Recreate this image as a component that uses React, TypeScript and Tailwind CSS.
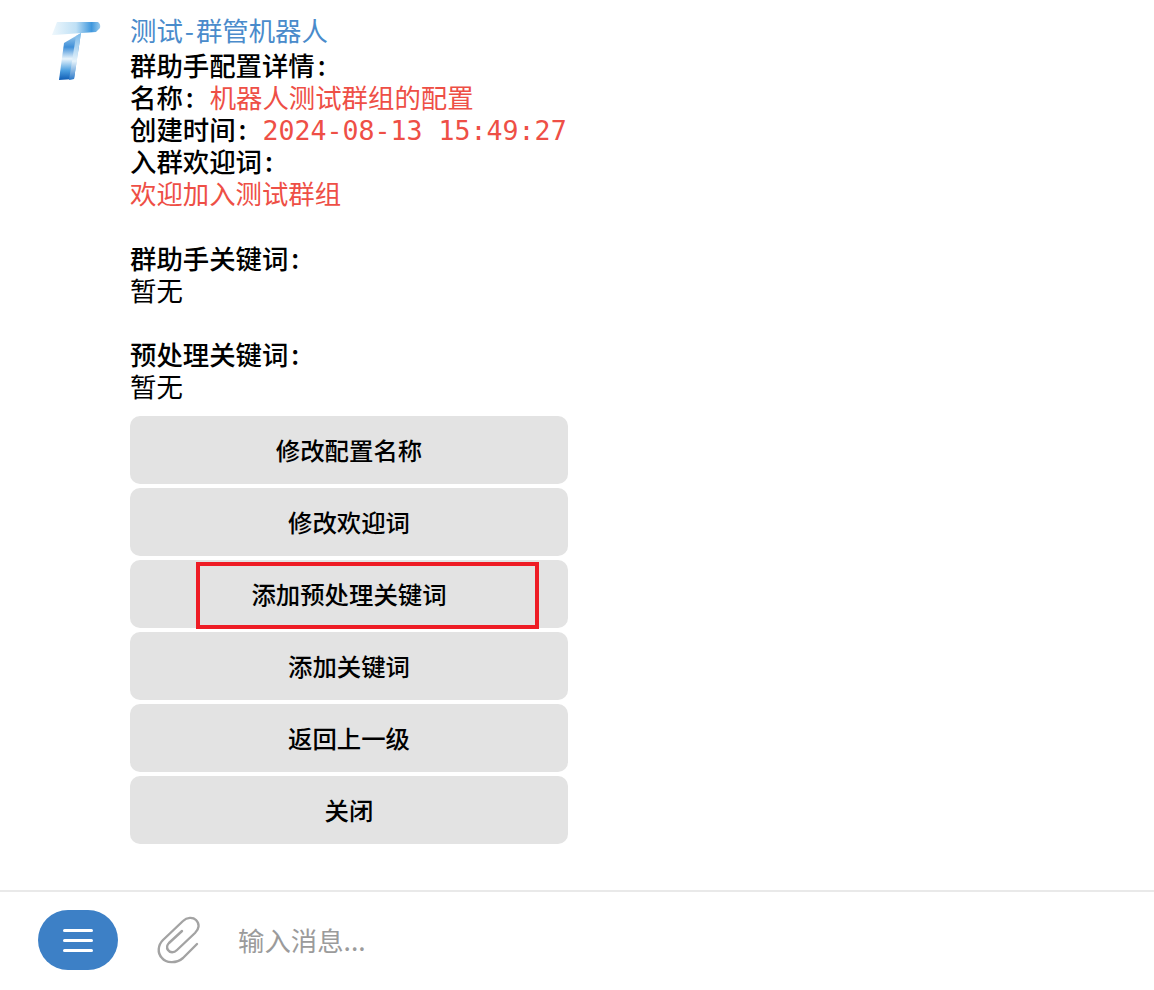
const buttons = ["修改配置名称", "修改欢迎词", "添加预处理关键词", "添加关键词", "返回上一级", "关闭"];

const Colon = () => <span className="ml-[3px]">:</span>;

const Logo = () => (
  <svg width="50" height="60" viewBox="0 0 50 60" className="mt-[8px]">
    <defs>
      <linearGradient id="bar" x1="0" y1="0" x2="1" y2="0">
        <stop offset="0" stopColor="#eef7fc" />
        <stop offset="0.5" stopColor="#bfe0f5" />
        <stop offset="0.82" stopColor="#3f97dd" />
        <stop offset="1" stopColor="#9acbec" />
      </linearGradient>
      <linearGradient id="stem" x1="0" y1="0" x2="0" y2="1">
        <stop offset="0" stopColor="#a8d2ee" />
        <stop offset="0.3" stopColor="#3f8fd8" />
        <stop offset="0.55" stopColor="#eaf5fc" />
        <stop offset="0.8" stopColor="#4a9ee0" />
        <stop offset="1" stopColor="#0f5cb4" />
      </linearGradient>
      <linearGradient id="side" x1="0" y1="0" x2="0" y2="1">
        <stop offset="0" stopColor="#79b8e8" />
        <stop offset="0.6" stopColor="#e6f3fb" />
        <stop offset="1" stopColor="#2a78c8" />
      </linearGradient>
    </defs>
    <path d="M6 1 L47 1 Q50 3 49 7 L45 11 L31 12 L3 14 L1 14 Z" fill="url(#bar)" />
    <path d="M13 22 L30 12 L23 58 L8 59 Z" fill="url(#stem)" />
    <path d="M25 15 L30 12 L23 58 L18 59 Z" fill="url(#side)" />
  </svg>
);

const Clip = () => (
  <svg width="44" height="48" viewBox="0 0 44 48" fill="none" stroke="#a3a3a3" strokeWidth="2.4" strokeLinecap="round" strokeLinejoin="round">
    <path d="M40 28 L26 42 C19 48 9 47 5 42 C0 37 1 29 6 24 L26 5 C30 1 36 1 39 4 C43 8 42 13 38 17 L20 34 C17 37 13 37 11 34 C9 31 10 29 12 27 L25 15" />
  </svg>
);

export default function App() {
  return (
    <div className="w-[1154px] h-[990px] bg-white flex flex-col overflow-hidden font-['Noto_Sans_CJK_SC',sans-serif] text-[26.4px] leading-[32px] text-black">
      <div className="h-[890px] flex pt-[13px] pl-[51px] gap-[29px]">
        <Logo />
        <div className="w-[438px] flex flex-col">
          <div className="text-[#4a8bcb] mt-[1px] mb-[3px] whitespace-nowrap">测试<span className="mx-[2px]">-</span>群管机器人</div>
          <div className="font-medium">群助手配置详情<Colon /></div>
          <div className="whitespace-nowrap">
            <span className="font-medium">名称<Colon /></span>
            <span className="text-[#ee4f46] ml-[16px]">机器人测试群组的配置</span>
          </div>
          <div className="h-[32px] whitespace-nowrap">
            <span className="font-medium">创建时间<Colon /></span>
            <span className="text-[#ee4f46] ml-[16px] font-['DejaVu_Sans_Mono',monospace] text-[26.6px]">2024-08-13 15:49:27</span>
          </div>
          <div className="font-medium">入群欢迎词<Colon /></div>
          <div className="text-[#ee4f46]">欢迎加入测试群组</div>
          <div className="h-[33px]" />
          <div className="font-medium">群助手关键词<Colon /></div>
          <div>暂无</div>
          <div className="h-[32px]" />
          <div className="font-medium">预处理关键词<Colon /></div>
          <div>暂无</div>
          <div className="flex flex-col gap-[4px] mt-[14px]">
            {buttons.map((label) => (
              <div key={label} className="relative h-[68px] rounded-[10px] bg-[#e3e3e3] flex items-center justify-center text-[24.4px] font-medium leading-[32px]">
                {label}
                {label === "添加预处理关键词" && (
                  <div className="absolute left-[66px] top-[2px] w-[343px] h-[67px] border-[4px] border-[#ee1c25]" />
                )}
              </div>
            ))}
          </div>
        </div>
      </div>
      <div className="h-[100px] border-t-2 border-[#e9e9e9] flex items-center pl-[38px] pb-[2px]">
        <div className="w-[80px] h-[60px] rounded-[30px] bg-[#3d80c6] flex flex-col items-center justify-center gap-[7px]">
          <div className="w-[30px] h-[3px] rounded-full bg-white" />
          <div className="w-[30px] h-[3px] rounded-full bg-white" />
          <div className="w-[30px] h-[3px] rounded-full bg-white" />
        </div>
        <div className="ml-[39px] mr-[40px] w-[44px] h-[48px] flex">
          <Clip />
        </div>
        <div className="-ml-[3px] text-[#9b9b9b]">输入消息...</div>
      </div>
    </div>
  );
}
